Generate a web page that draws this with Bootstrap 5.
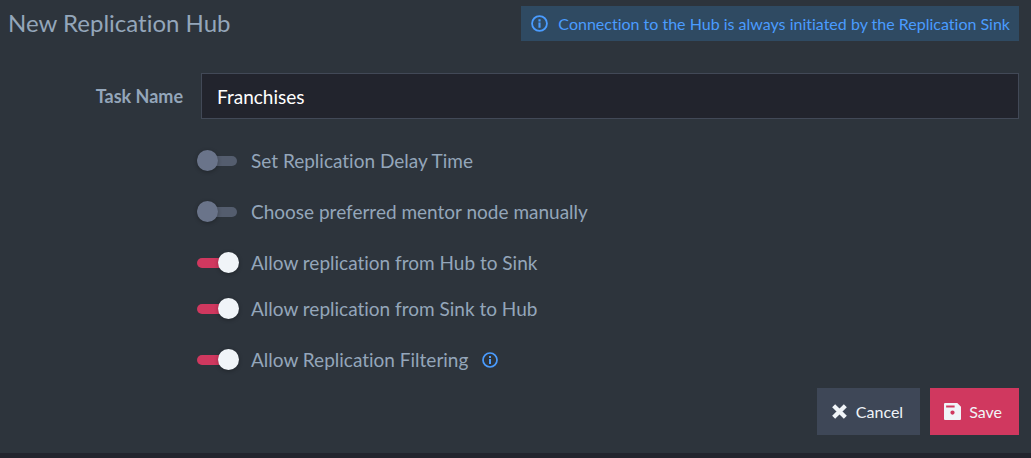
<!DOCTYPE html>
<html lang="en">
<head>
<meta charset="utf-8">
<meta name="viewport" content="width=device-width, initial-scale=1">
<title>New Replication Hub</title>
<link href="https://cdn.jsdelivr.net/npm/bootstrap@5.3.0/dist/css/bootstrap.min.css" rel="stylesheet">
<style>
body { background: #22242d; color: #94a6ba; font-family: Lato, sans-serif; font-size: 19px; line-height: 24px; font-variant-ligatures: none; }
.panel { background: #2d343c; padding: 6px 12px 18px 8px; }
.panel-title { font-size: 24px; line-height: 34px; font-weight: 400; }
.hub-note { background: #2f4a62; color: #4a9cff; font-size: 16px; line-height: 35px; padding: 0 9px 0 10px; }
.hub-note svg { margin-right: 10px; }
.task-row { margin-top: 32px; }
.label-col { width: 193px; padding-right: 18px; text-align: right; font-size: 18px; font-weight: 700; }
.task-input, .task-input:focus { background: #22242d; color: #fff; border: 1px solid #424957; border-radius: 0; box-shadow: none; height: 46px; padding: 0 15px; font-size: 19px; }
.options { margin: 30px 0 16px 189px; gap: 27px; }
.options .close-up { margin-top: -5px; }
.toggle { appearance: none; position: relative; width: 40px; height: 10px; margin: 0 14px 0 0; border-radius: 5px; background: #545d6e; cursor: pointer; }
.toggle::before { content: ""; position: absolute; left: 0; top: -6px; width: 21px; height: 21px; border-radius: 50%; background: #6a748a; box-shadow: 0 1px 4px rgba(0,0,0,.3); }
.toggle:checked { background: #d0385f; }
.toggle:checked::before { left: 21px; background: #f0f4f8; }
.info-btn { color: #4a9cff; margin-left: 14px; }
.actions { gap: 10px; }
.action { border: 0; border-radius: 0; height: 47px; font-size: 16px; color: #f0f4f8; padding: 0 17px 0 14px; }
.action:hover { color: #fff; }
.action svg { margin-right: 8px; }
.cancel, .cancel:hover { background: #3e4757; }
.save, .save:hover { background: #d0385f; }
</style>
</head>
<body>
<svg class="d-none">
  <symbol id="info" viewBox="0 0 16 16"><circle cx="8" cy="8" r="7" fill="none" stroke="currentColor" stroke-width="1.7"/><path fill="currentColor" d="M7 4h2v2H7zM7 7h2v5H7z"/></symbol>
</svg>
<form class="panel">
  <header class="d-flex justify-content-between align-items-start">
    <h1 class="panel-title m-0">New Replication Hub</h1>
    <div class="hub-note d-flex align-items-center"><svg width="17" height="17"><use href="#info"/></svg><span>Connection to the Hub is always initiated by the Replication Sink</span></div>
  </header>
  <div class="task-row d-flex align-items-center">
    <label class="label-col flex-shrink-0" for="task">Task Name</label>
    <input id="task" type="text" class="form-control task-input" value="Franchises">
  </div>
  <div class="options d-flex flex-column">
    <div class="d-flex align-items-center"><input class="toggle" type="checkbox" role="switch" id="delay"><label for="delay">Set Replication Delay Time</label></div>
    <div class="d-flex align-items-center"><input class="toggle" type="checkbox" role="switch" id="mentor"><label for="mentor">Choose preferred mentor node manually</label></div>
    <div class="d-flex align-items-center"><input class="toggle" type="checkbox" role="switch" id="hubsink" checked><label for="hubsink">Allow replication from Hub to Sink</label></div>
    <div class="d-flex align-items-center close-up"><input class="toggle" type="checkbox" role="switch" id="sinkhub" checked><label for="sinkhub">Allow replication from Sink to Hub</label></div>
    <div class="d-flex align-items-center"><input class="toggle" type="checkbox" role="switch" id="filter" checked><label for="filter">Allow Replication Filtering</label><button type="button" class="btn p-0 border-0 d-flex info-btn" aria-label="About filtering"><svg width="16" height="16"><use href="#info"/></svg></button></div>
  </div>
  <div class="actions d-flex justify-content-end">
    <button type="button" class="btn action cancel d-flex align-items-center"><svg width="17" height="17" viewBox="0 0 16 16"><path d="M2.5 2.500 13.500 13.500M13.500 2.500 2.500 13.500" stroke="currentColor" stroke-width="4" fill="none"/></svg>Cancel</button>
    <button type="submit" class="btn action save d-flex align-items-center"><svg width="17" height="17" viewBox="0 0 16 16"><path fill="currentColor" fill-rule="evenodd" d="M1 0H12.500L16 3.500V15Q16 16 15 16H1Q0 16 0 15V1Q0 0 1 0ZM2 2.300V4.300H10V2.300ZM8 7A2 2 0 1 0 8 11A2 2 0 1 0 8 7Z"/></svg>Save</button>
  </div>
</form>
<script src="https://cdn.jsdelivr.net/npm/bootstrap@5.3.0/dist/js/bootstrap.bundle.min.js"></script>
</body>
</html>
